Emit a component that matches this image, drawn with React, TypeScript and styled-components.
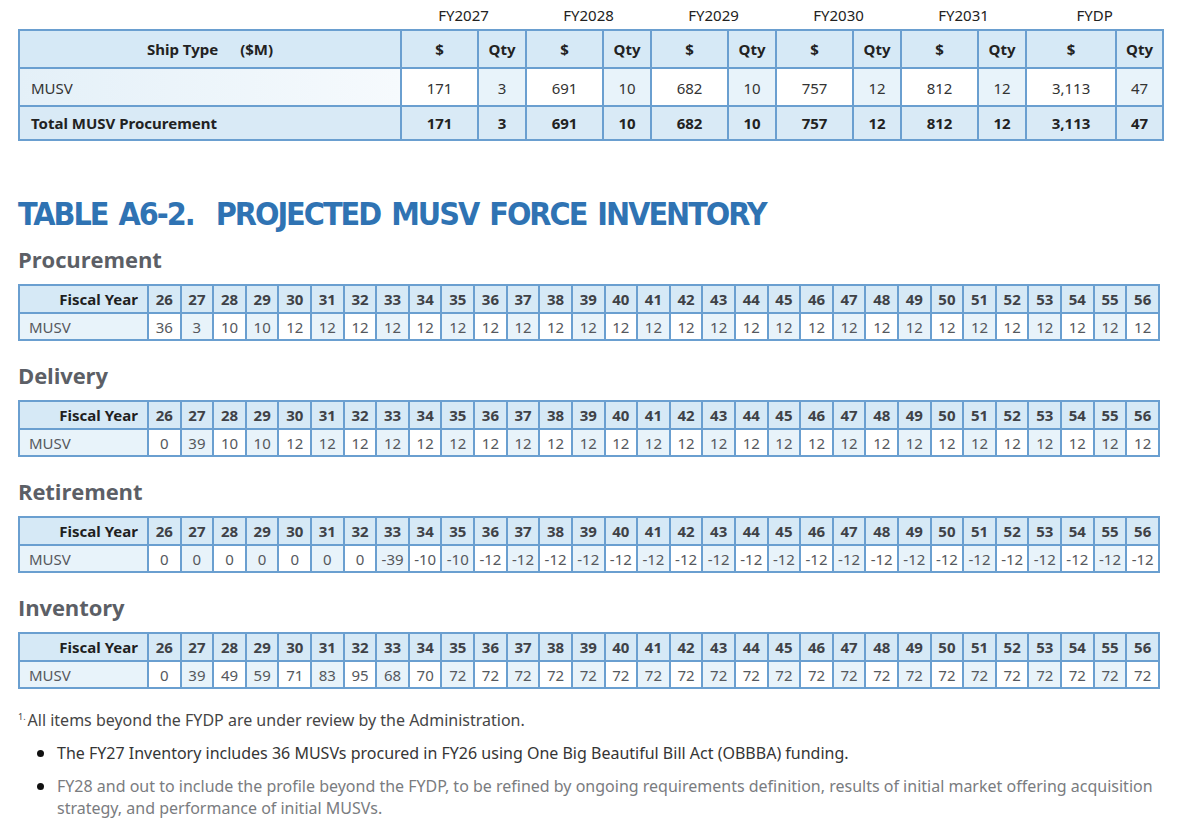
import * as React from "react";
import styled, { createGlobalStyle } from "styled-components";

const GlobalStyle = createGlobalStyle`
  html, body {
    margin: 0;
    padding: 0;
    background: #ffffff;
  }
  body {
    font-family: "Noto Sans", "Liberation Sans", Arial, sans-serif;
    color: #333;
  }
`;

const BORDER = "#6a9fd0";
const HEAD_BG = "#d6e9f6";
const LIGHT_BG = "#e8f3fa";

const Page = styled.div`
  width: 1144px;
  padding: 0 38px 0 18px;
`;

/* ---------- summary table ---------- */

const SummaryTable = styled.table`
  width: 1144px;
  table-layout: fixed;
  border-collapse: collapse;
  font-size: 15px;
  color: #2a2a2a;
`;

const YearLabel = styled.th`
  height: 29px;
  font-weight: 400;
  font-size: 15px;
  text-align: center;
  vertical-align: middle;
  color: #222;
  padding: 0;
`;

const SumHead = styled.th<{ $align?: string }>`
  height: 36px;
  background: ${HEAD_BG};
  border: 2px solid ${BORDER};
  font-weight: 700;
  text-align: ${(p) => p.$align || "center"};
  padding: 0;
  color: #222;
  .gap {
    display: inline-block;
    width: 22px;
  }
`;

const SumCell = styled.td<{ $light?: boolean; $label?: boolean }>`
  height: 34px;
  border: 2px solid ${BORDER};
  text-align: ${(p) => (p.$label ? "left" : "center")};
  padding: ${(p) => (p.$label ? "2px 0 0 11px" : "2px 0 0 0")};
  background: ${(p) =>
    p.$label
      ? "linear-gradient(90deg, #e4f0f8 0%, #f6fafd 100%)"
      : p.$light
      ? LIGHT_BG
      : "#ffffff"};
  color: #333;
`;

const TotalCell = styled.td<{ $label?: boolean }>`
  height: 32px;
  border: 2px solid ${BORDER};
  background: #d9eaf6;
  font-weight: 700;
  text-align: ${(p) => (p.$label ? "left" : "center")};
  padding: ${(p) => (p.$label ? "0 0 0 11px" : "0")};
  color: #222;
`;

/* ---------- title and sections ---------- */

const Title = styled.h1`
  margin: 53px 0 0 0;
  font-family: "DejaVu Sans Condensed", "Roboto", sans-serif;
  font-weight: 900;
  font-size: 32px;
  line-height: 40px;
  letter-spacing: -2px;
  word-spacing: 3px;
  color: #2f73b3;
`;

const Section = styled.section`
  margin-top: 17px;
  &:first-of-type {
    margin-top: 8px;
  }
`;

const SubHeading = styled.h2`
  margin: 0;
  height: 34px;
  font-family: "Open Sans", "Noto Sans", sans-serif;
  font-weight: 700;
  font-size: 22px;
  line-height: 34px;
  letter-spacing: -0.1px;
  color: #5c5f66;
`;

const YearTable = styled.table`
  width: 1142px;
  margin-top: 8px;
  table-layout: fixed;
  border-collapse: collapse;
  font-size: 15px;
`;

const YearHead = styled.th<{ $label?: boolean }>`
  height: 26px;
  background: ${HEAD_BG};
  border: 2px solid ${BORDER};
  font-weight: 700;
  color: ${(p) => (p.$label ? "#1f1f1f" : "#3f4247")};
  text-align: ${(p) => (p.$label ? "right" : "center")};
  padding: ${(p) => (p.$label ? "0 9px 0 0" : "0")};
`;

const YearCell = styled.td<{ $light?: boolean; $label?: boolean }>`
  height: 25px;
  border: 2px solid ${BORDER};
  background: ${(p) => (p.$label || p.$light ? LIGHT_BG : "#ffffff")};
  color: #55585d;
  text-align: ${(p) => (p.$label ? "left" : "center")};
  padding: ${(p) => (p.$label ? "0 0 0 9px" : "0")};
  white-space: nowrap;
`;

/* ---------- notes ---------- */

const Notes = styled.div`
  margin-top: 17px;
  font-size: 16px;
  line-height: 22px;
`;

const Footnote = styled.p`
  margin: 0;
  color: #454545;
  sup {
    font-size: 9px;
    margin-right: 2px;
    vertical-align: 6px;
  }
`;

const Bullets = styled.ul`
  margin: 11px 0 0 0;
  padding: 0 0 0 39px;
  list-style: none;
`;

const Bullet = styled.li<{ $muted?: boolean }>`
  position: relative;
  margin-bottom: 11px;
  color: ${(p) => (p.$muted ? "#7a7c80" : "#353535")};
  &::before {
    content: "";
    position: absolute;
    left: -20px;
    top: 8px;
    width: 7px;
    height: 7px;
    border-radius: 50%;
    background: #111;
  }
`;

const years = ["FY2027", "FY2028", "FY2029", "FY2030", "FY2031", "FYDP"];
const dollars = ["171", "691", "682", "757", "812", "3,113"];
const qtys = ["3", "10", "10", "12", "12", "47"];

const fiscal = Array.from({ length: 31 }, (_, i) => String(26 + i));
const fill = (head: number[], v: number) =>
  head.concat(Array(31 - head.length).fill(v));

const sections = [
  { name: "Procurement", values: fill([36, 3, 10, 10], 12) },
  { name: "Delivery", values: fill([0, 39, 10, 10], 12) },
  { name: "Retirement", values: fill([0, 0, 0, 0, 0, 0, 0, -39, -10, -10], -12) },
  { name: "Inventory", values: fill([0, 39, 49, 59, 71, 83, 95, 68, 70], 72) },
];

function YearSection({ name, values }: { name: string; values: number[] }) {
  return (
    <Section>
      <SubHeading>{name}</SubHeading>
      <YearTable>
        <colgroup>
          <col style={{ width: 129 }} />
          {fiscal.map((f) => (
            <col key={f} />
          ))}
        </colgroup>
        <thead>
          <tr>
            <YearHead $label>Fiscal Year</YearHead>
            {fiscal.map((f) => (
              <YearHead key={f}>{f}</YearHead>
            ))}
          </tr>
        </thead>
        <tbody>
          <tr>
            <YearCell $label>MUSV</YearCell>
            {values.map((v, i) => (
              <YearCell key={i} $light={i % 2 === 1}>
                {v}
              </YearCell>
            ))}
          </tr>
        </tbody>
      </YearTable>
    </Section>
  );
}

export default function App() {
  return (
    <Page>
      <GlobalStyle />
      <SummaryTable>
        <colgroup>
          <col style={{ width: 382 }} />
          {years.map((y, i) => (
            <React.Fragment key={y}>
              <col style={{ width: i === 5 ? 90 : 77 }} />
              <col style={{ width: i === 5 ? 47 : 48 }} />
            </React.Fragment>
          ))}
        </colgroup>
        <thead>
          <tr>
            <YearLabel />
            {years.map((y) => (
              <YearLabel key={y} colSpan={2}>
                {y}
              </YearLabel>
            ))}
          </tr>
          <tr>
            <SumHead>
              Ship Type<span className="gap" />($M)
            </SumHead>
            {years.map((y) => (
              <React.Fragment key={y}>
                <SumHead>$</SumHead>
                <SumHead>Qty</SumHead>
              </React.Fragment>
            ))}
          </tr>
        </thead>
        <tbody>
          <tr>
            <SumCell $label>MUSV</SumCell>
            {years.map((y, i) => (
              <React.Fragment key={y}>
                <SumCell>{dollars[i]}</SumCell>
                <SumCell $light>{qtys[i]}</SumCell>
              </React.Fragment>
            ))}
          </tr>
          <tr>
            <TotalCell $label>Total MUSV Procurement</TotalCell>
            {years.map((y, i) => (
              <React.Fragment key={y}>
                <TotalCell>{dollars[i]}</TotalCell>
                <TotalCell>{qtys[i]}</TotalCell>
              </React.Fragment>
            ))}
          </tr>
        </tbody>
      </SummaryTable>

      <Title>TABLE A6-2.&nbsp; PROJECTED MUSV FORCE INVENTORY</Title>

      {sections.map((s) => (
        <YearSection key={s.name} name={s.name} values={s.values} />
      ))}

      <Notes>
        <Footnote>
          <sup>1.</sup>All items beyond the FYDP are under review by the
          Administration.
        </Footnote>
        <Bullets>
          <Bullet>
            The FY27 Inventory includes 36 MUSVs procured in FY26 using One Big
            Beautiful Bill Act (OBBBA) funding.
          </Bullet>
          <Bullet $muted>
            FY28 and out to include the profile beyond the FYDP, to be refined
            by ongoing requirements definition, results of initial market
            offering acquisition strategy, and performance of initial MUSVs.
          </Bullet>
        </Bullets>
      </Notes>
    </Page>
  );
}
